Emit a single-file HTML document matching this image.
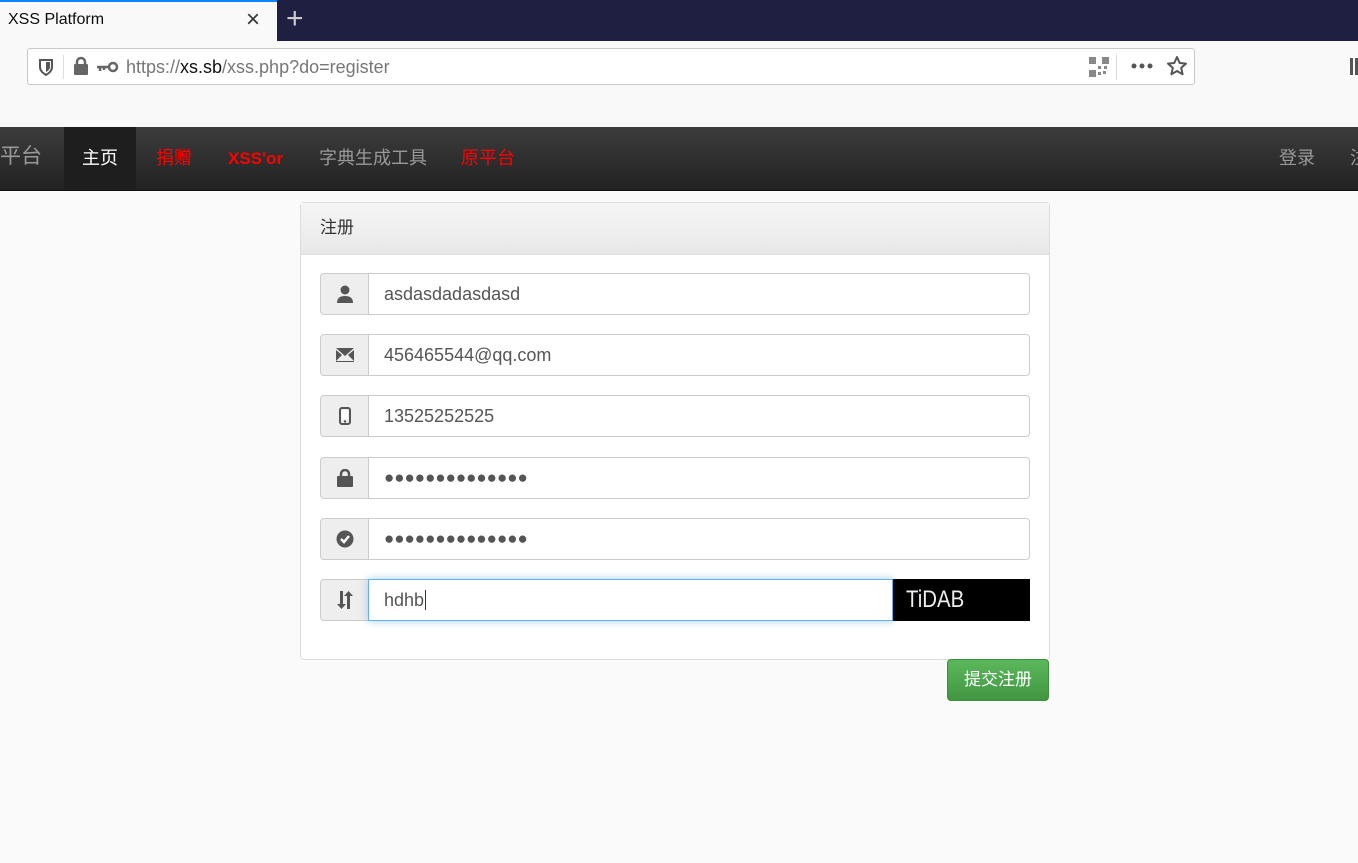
<!DOCTYPE html>
<html><head><meta charset="utf-8"><style>
*{box-sizing:border-box;margin:0;padding:0}
body{width:1358px;height:863px;background:#fafafa;font-family:"Liberation Sans","Noto Sans CJK SC",sans-serif;position:relative;overflow:hidden}
.abs{position:absolute}
.tabbar{left:0;top:0;width:1358px;height:41px;background:#1f2041}
.tab{left:0;top:0;width:277px;height:41px;background:#f9f9fa;border-top:2px solid #0a84ff}
.chrome{left:0;top:41px;width:1358px;height:86px;background:#f9f9fa}
.url{left:27px;top:48px;width:1168px;height:37px;background:#fff;border:1px solid #c8c8c8;border-radius:3px}
.nav{left:0;top:127px;width:1358px;height:64px;background:linear-gradient(#3c3c3c,#222);border-bottom:1px solid #111}
.nav span{position:absolute;top:20px;font-size:18px;line-height:22px}
.panel{left:300px;top:202px;width:750px;height:458px;background:#fff;border:1px solid #ddd;border-radius:4px}
.ph{height:52px;background:linear-gradient(#f5f5f5,#e8e8e8);border-bottom:1px solid #ddd;padding:13px 19px;font-size:17px;line-height:24px;color:#333}
.row{position:absolute;left:320px;width:710px;height:42px}
.add{position:absolute;left:0;top:0;width:49px;height:42px;background:#eee;border:1px solid #ccc;border-radius:4px 0 0 4px;display:flex;align-items:center;justify-content:center}
.inp{position:absolute;left:48px;top:0;right:0;height:42px;background:#fff;border:1px solid #ccc;border-radius:0 4px 4px 0;padding:0 15px;line-height:40px;font-size:18px;color:#555}
.dots{letter-spacing:0px;font-size:17px}
</style></head><body>
<div class="abs tabbar"></div>
<div class="abs tab"><span class="abs" style="left:8px;top:9px;font-size:16px;color:#0c0c0d">XSS Platform</span><span class="abs" style="left:246px;top:4px;font-size:24px;color:#333">×</span></div>
<span class="abs" style="left:286px;top:2px;font-size:30px;color:#ccc;font-weight:300">+</span>
<div class="abs chrome"></div>
<div class="abs url">
<svg class="abs" style="left:10px;top:9px" width="16" height="18" viewBox="0 0 16 18"><path d="M2 2h12v7c0 4-3 6-6 8-3-2-6-4-6-8z" fill="none" stroke="#555" stroke-width="2"/><path d="M8 4v10c2-1 4-3 4-5V4z" fill="#555"/></svg>
<div class="abs" style="left:35px;top:6px;width:1px;height:24px;background:#ddd"></div>
<svg class="abs" style="left:45px;top:7px" width="46" height="20" viewBox="0 0 46 20"><rect x="1" y="8" width="14" height="11" rx="1" fill="#666"/><path d="M4 8V6a4 4 0 018 0v2" fill="none" stroke="#666" stroke-width="2.5"/><circle cx="40" cy="11" r="4" fill="none" stroke="#666" stroke-width="2.5"/><path d="M24 11h12M27 11v4M31 11v3" stroke="#666" stroke-width="2.5"/></svg>
<span class="abs" style="left:98px;top:8px;font-size:18px;color:#777">https://<span style="color:#111">xs.sb</span>/xss.php?do=register</span>
<svg class="abs" style="left:1061px;top:8px" width="20" height="20" viewBox="0 0 20 20" fill="#888"><rect x="0" y="0" width="7" height="7"/><rect x="13" y="0" width="7" height="7"/><rect x="0" y="13" width="7" height="7"/><rect x="9" y="9" width="3" height="3"/><rect x="14" y="14" width="3" height="3"/><rect x="9" y="15" width="3" height="3"/><rect x="15" y="9" width="3" height="3"/></svg>
<div class="abs" style="left:1088px;top:5px;width:1px;height:26px;background:#ddd"></div>
<svg class="abs" style="left:1103px;top:14px" width="22" height="6" viewBox="0 0 22 6" fill="#555"><circle cx="3" cy="3" r="2.5"/><circle cx="11" cy="3" r="2.5"/><circle cx="19" cy="3" r="2.5"/></svg>
<svg class="abs" style="left:1138px;top:6px" width="22" height="22" viewBox="0 0 22 22"><path d="M11 2l2.7 6 6.3.6-4.8 4.3 1.4 6.4L11 16l-5.6 3.3 1.4-6.4L2 8.6l6.3-.6z" fill="none" stroke="#555" stroke-width="2" stroke-linejoin="round"/></svg>
</div>
<div class="abs" style="left:1350px;top:58px;width:8px;height:17px;border-left:3px solid #555;border-right:3px solid #555"></div>
<div class="abs nav">
<span style="left:0;top:19px;font-size:21px;color:#999">平台</span>
<div class="abs" style="left:64px;top:0;width:72px;height:63px;background:#1e1e1e"></div>
<span style="left:82px;color:#fff">主页</span>
<span style="left:156px;color:#f00">捐赠</span>
<span style="left:228px;color:#f00;font-weight:bold;font-size:17px;top:21px">XSS'or</span>
<span style="left:319px;color:#999">字典生成工具</span>
<span style="left:461px;color:#f00">原平台</span>
<span style="left:1279px;color:#999">登录</span>
<span style="left:1350px;color:#999">注</span>
</div>
<div class="abs panel"><div class="ph">注册</div></div>
<div class="row" style="top:273px"><div class="add"><svg width="18" height="18" viewBox="0 0 18 18" fill="#555"><circle cx="9" cy="5" r="4.5"/><path d="M1 18c0-5 3-7 8-7s8 2 8 7z"/></svg></div><div class="inp">asdasdadasdasd</div></div>
<div class="row" style="top:334px"><div class="add"><svg width="18" height="14" viewBox="0 0 18 14" fill="#555"><path d="M0 0h18L9 8z"/><path d="M0 2v12h18V2L12 7l6 6H0l6-6z"/></svg></div><div class="inp">456465544@qq.com</div></div>
<div class="row" style="top:395px"><div class="add"><svg width="12" height="18" viewBox="0 0 12 18"><rect x="1" y="1" width="10" height="16" rx="2" fill="none" stroke="#555" stroke-width="2"/><rect x="3" y="3" width="6" height="9" fill="#fff"/><circle cx="6" cy="14.5" r="1.2" fill="#555"/></svg></div><div class="inp">13525252525</div></div>
<div class="row" style="top:457px"><div class="add"><svg width="16" height="18" viewBox="0 0 16 18"><rect x="0" y="7" width="16" height="11" rx="1" fill="#555"/><path d="M4 7V5a4 4 0 018 0v2" fill="none" stroke="#555" stroke-width="2.5"/></svg></div><div class="inp dots">●●●●●●●●●●●●●●</div></div>
<div class="row" style="top:518px"><div class="add"><svg width="18" height="18" viewBox="0 0 18 18"><circle cx="9" cy="9" r="8.5" fill="#555"/><path d="M5 9l3 3 5-6" fill="none" stroke="#fff" stroke-width="2.5"/></svg></div><div class="inp dots">●●●●●●●●●●●●●●</div></div>
<div class="row" style="top:579px"><div class="add"><svg width="18" height="20" viewBox="0 0 18 20" fill="#555"><path d="M4 1h3v13h3l-4.5 5L1 14h3z"/><path d="M11 19h3V6h3L12.5 1 8 6h3z"/></svg></div><div class="inp" style="border-color:#66afe9;box-shadow:0 0 8px rgba(102,175,233,.6);right:137px;border-radius:0">hdhb<span style="border-left:1px solid #333;margin-left:1px"></span></div>
<div class="abs" style="left:573px;top:0;width:137px;height:42px;background:#000;color:#eee;font-family:'Liberation Sans',sans-serif;font-size:24px;line-height:42px;padding-left:13px;transform-origin:left;"><span style="display:inline-block;transform:scaleX(0.85);transform-origin:left">TiDAB</span></div></div>
<div class="abs" style="left:947px;top:659px;width:102px;height:42px;background:linear-gradient(#5cb85c,#419641);border:1px solid #3e8f3e;border-radius:4px;color:#fff;font-size:17px;line-height:40px;text-align:center">提交注册</div>
</body></html>
